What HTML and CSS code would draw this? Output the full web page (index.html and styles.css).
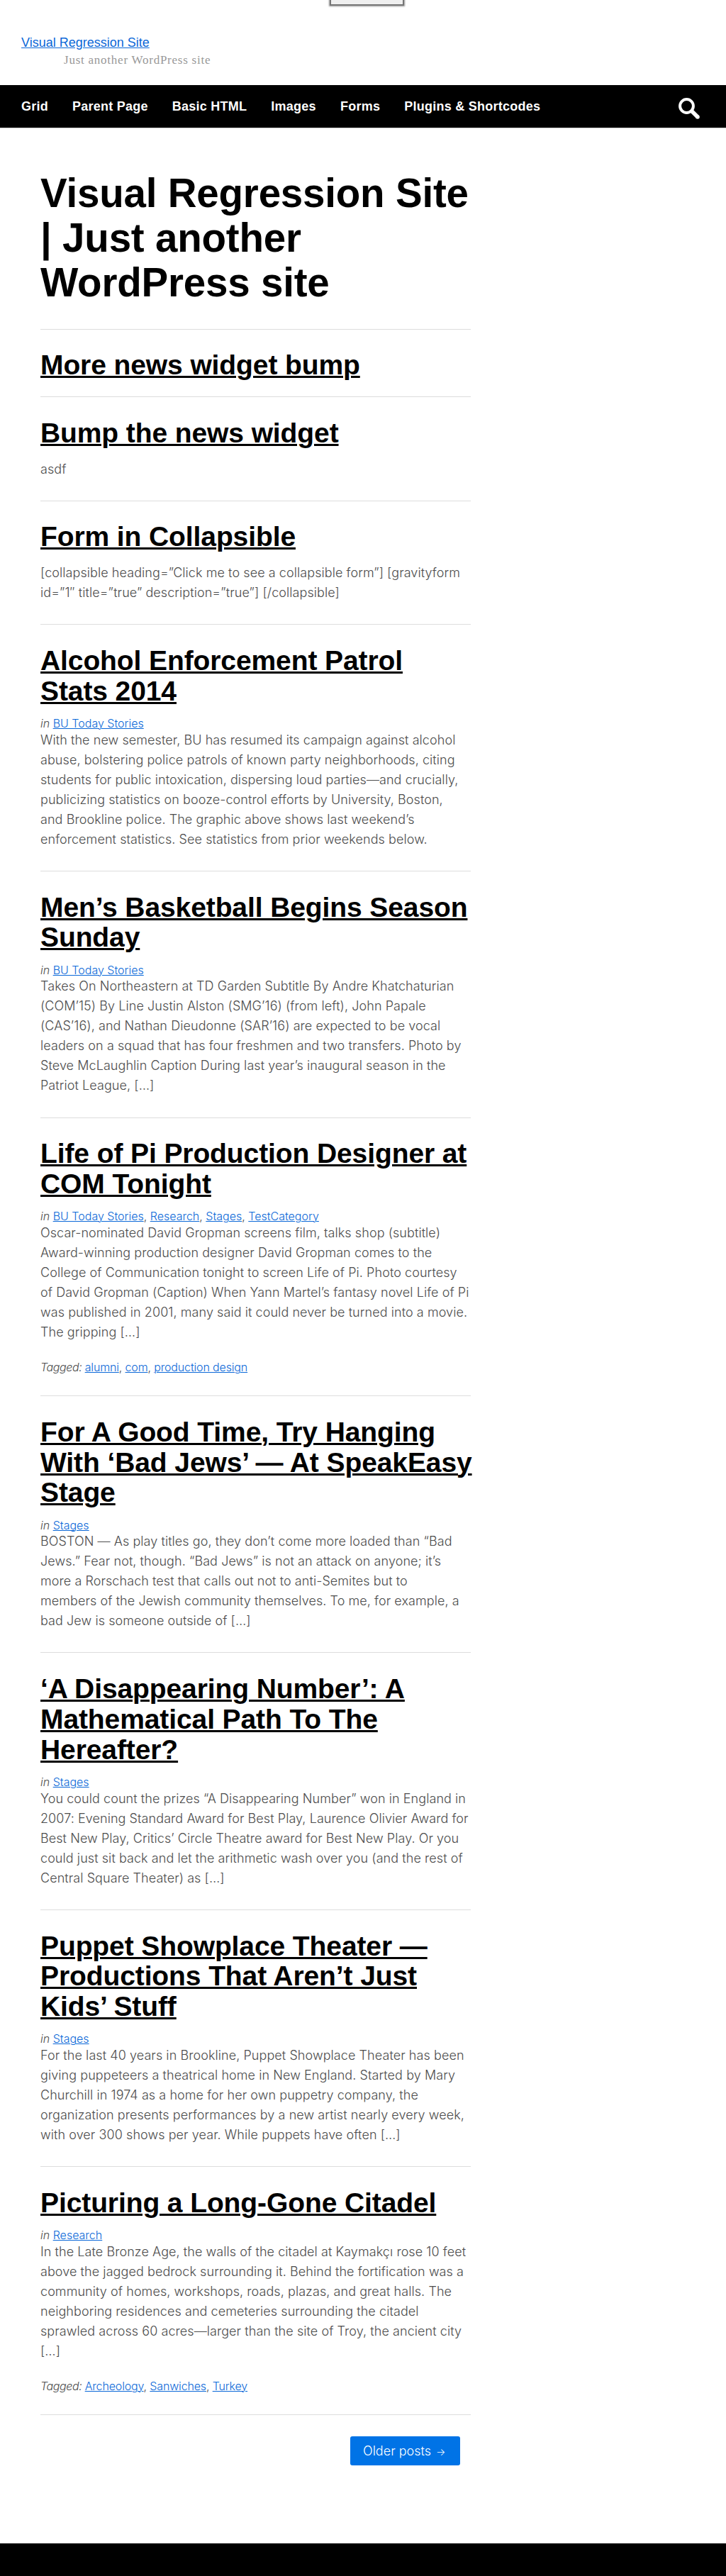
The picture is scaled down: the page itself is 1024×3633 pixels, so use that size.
FILE: index.html
```html
<!DOCTYPE html>
<html lang="en">
<head>
<meta charset="utf-8">
<title>Visual Regression Site | Just another WordPress site</title>
<link rel="stylesheet" href="styles.css">
</head>
<body>
<div class="skip-button"></div>
<header class="masthead">
  <a class="site-name" href="#">Visual Regression Site</a>
  <p class="tagline">Just another WordPress site</p>
</header>
<nav class="nav">
  <ul class="nav-list">
    <li>Grid</li>
    <li>Parent Page</li>
    <li>Basic HTML</li>
    <li>Images</li>
    <li>Forms</li>
    <li>Plugins &amp; Shortcodes</li>
  </ul>
  <svg class="search" width="30" height="30" viewBox="0 0 30 30"><circle cx="11.5" cy="11.5" r="9.4" fill="none" stroke="#fff" stroke-width="4"/><path d="M18.5 18.5L27.3 27.3" stroke="#fff" stroke-width="5.6"/><circle cx="27" cy="27" r="2.8" fill="#fff"/></svg>
</nav>
<main class="content">
  <h1>Visual Regression Site<br>| Just another<br>WordPress site</h1>
  <article class="post">
    <h2><a href="#">More news widget bump</a></h2>
  </article>
  <article class="post">
    <h2><a href="#">Bump the news widget</a></h2>
    <p>asdf</p>
  </article>
  <article class="post">
    <h2><a href="#">Form in Collapsible</a></h2>
    <p>[collapsible heading=”Click me to see a collapsible form”] [gravityform<br>id=”1″ title=”true” description=”true”] [/collapsible]</p>
  </article>
  <article class="post">
    <h2><a href="#">Alcohol Enforcement Patrol<br>Stats 2014</a></h2>
    <div class="meta"><em>in</em> <a href="#">BU Today Stories</a></div>
    <p>With the new semester, BU has resumed its campaign against alcohol<br>abuse, bolstering police patrols of known party neighborhoods, citing<br>students for public intoxication, dispersing loud parties—and crucially,<br>publicizing statistics on booze-control efforts by University, Boston,<br>and Brookline police. The graphic above shows last weekend’s<br>enforcement statistics. See statistics from prior weekends below.</p>
  </article>
  <article class="post">
    <h2><a href="#">Men’s Basketball Begins Season<br>Sunday</a></h2>
    <div class="meta"><em>in</em> <a href="#">BU Today Stories</a></div>
    <p>Takes On Northeastern at TD Garden Subtitle By Andre Khatchaturian<br>(COM’15) By Line Justin Alston (SMG’16) (from left), John Papale<br>(CAS’16), and Nathan Dieudonne (SAR’16) are expected to be vocal<br>leaders on a squad that has four freshmen and two transfers. Photo by<br>Steve McLaughlin Caption During last year’s inaugural season in the<br>Patriot League, […]</p>
  </article>
  <article class="post">
    <h2><a href="#">Life of Pi Production Designer at<br>COM Tonight</a></h2>
    <div class="meta"><em>in</em> <a href="#">BU Today Stories</a>, <a href="#">Research</a>, <a href="#">Stages</a>, <a href="#">TestCategory</a></div>
    <p>Oscar-nominated David Gropman screens film, talks shop (subtitle)<br>Award-winning production designer David Gropman comes to the<br>College of Communication tonight to screen Life of Pi. Photo courtesy<br>of David Gropman (Caption) When Yann Martel’s fantasy novel Life of Pi<br>was published in 2001, many said it could never be turned into a movie.<br>The gripping […]</p>
    <div class="meta tags"><em>Tagged:</em> <a href="#">alumni</a>, <a href="#">com</a>, <a href="#">production design</a></div>
  </article>
  <article class="post">
    <h2><a href="#">For A Good Time, Try Hanging<br>With ‘Bad Jews’ — At SpeakEasy<br>Stage</a></h2>
    <div class="meta"><em>in</em> <a href="#">Stages</a></div>
    <p>BOSTON — As play titles go, they don’t come more loaded than “Bad<br>Jews.” Fear not, though. “Bad Jews” is not an attack on anyone; it’s<br>more a Rorschach test that calls out not to anti-Semites but to<br>members of the Jewish community themselves. To me, for example, a<br>bad Jew is someone outside of […]</p>
  </article>
  <article class="post">
    <h2><a href="#">‘A Disappearing Number’: A<br>Mathematical Path To The<br>Hereafter?</a></h2>
    <div class="meta"><em>in</em> <a href="#">Stages</a></div>
    <p>You could count the prizes “A Disappearing Number” won in England in<br>2007: Evening Standard Award for Best Play, Laurence Olivier Award for<br>Best New Play, Critics’ Circle Theatre award for Best New Play. Or you<br>could just sit back and let the arithmetic wash over you (and the rest of<br>Central Square Theater) as […]</p>
  </article>
  <article class="post">
    <h2><a href="#">Puppet Showplace Theater —<br>Productions That Aren’t Just<br>Kids’ Stuff</a></h2>
    <div class="meta"><em>in</em> <a href="#">Stages</a></div>
    <p>For the last 40 years in Brookline, Puppet Showplace Theater has been<br>giving puppeteers a theatrical home in New England. Started by Mary<br>Churchill in 1974 as a home for her own puppetry company, the<br>organization presents performances by a new artist nearly every week,<br>with over 300 shows per year. While puppets have often […]</p>
  </article>
  <article class="post last">
    <h2><a href="#">Picturing a Long-Gone Citadel</a></h2>
    <div class="meta"><em>in</em> <a href="#">Research</a></div>
    <p>In the Late Bronze Age, the walls of the citadel at Kaymakçı rose 10 feet<br>above the jagged bedrock surrounding it. Behind the fortification was a<br>community of homes, workshops, roads, plazas, and great halls. The<br>neighboring residences and cemeteries surrounding the citadel<br>sprawled across 60 acres—larger than the site of Troy, the ancient city<br>[…]</p>
    <div class="meta tags"><em>Tagged:</em> <a href="#">Archeology</a>, <a href="#">Sanwiches</a>, <a href="#">Turkey</a></div>
  </article>
  <div class="pager"><a class="older" href="#">Older posts <span class="arrow">→</span></a></div>
</main>
<footer class="footer"></footer>
</body>
</html>
```
FILE: styles.css
```css
* { box-sizing: border-box; }
body {
  margin: 0;
  min-height: 3633px;
  display: flex;
  flex-direction: column;
  background: #fff;
  color: #4c4c4c;
  font-family: Inter, sans-serif;
  font-size: 18px;
  font-weight: 300;
  line-height: 28px;
}
h1, h2, p, ul { margin: 0; padding: 0; }
a { color: #0b68d8; }

.skip-button {
  position: absolute;
  top: -32px;
  left: 465px;
  width: 105px;
  height: 40px;
  border: 2px solid #767676;
  background: #efefef;
  box-shadow: 0 0 2px 1px rgba(0, 0, 0, .4);
}
.masthead { height: 120px; padding: 49px 30px 0; }
.site-name {
  display: block;
  font: 18px/22px "Liberation Sans", sans-serif;
}
.tagline {
  padding: 4px 0 0 60px;
  font: 17px/20px "Liberation Serif", serif;
  letter-spacing: .76px;
  color: #999;
}
.nav {
  height: 61px;
  padding: 0 37px 0 30px;
  display: flex;
  align-items: center;
  justify-content: space-between;
  background: #000;
  border-bottom: 1px solid #ccc;
}
.nav-list {
  display: flex;
  gap: 34px;
  list-style: none;
  color: #fff;
  font: 700 18px/28px "Liberation Sans", sans-serif;
  letter-spacing: .25px;
  white-space: nowrap;
}
.search { margin-top: 5px; }

.content { width: 664px; padding: 60px 0 0 57px; flex: 1; }
h1 {
  height: 222.5px;
  color: #000;
  font: 700 56.5px/63px "Liberation Sans", sans-serif;
  letter-spacing: -.2px;
  white-space: nowrap;
}
.post {
  border-top: 1px solid #ddd;
  padding: 29.6px 0 8px;
}
.post h2 {
  margin-bottom: 14.2px;
  font: 700 39px/42.9px "Liberation Sans", sans-serif;
  letter-spacing: -.1px;
  white-space: nowrap;
}
.post h2 a {
  color: #000;
  text-decoration-thickness: 3px;
  text-underline-offset: 2px;
}
.post p {
  padding-top: .7px;
  margin-bottom: 22.25px;
  letter-spacing: .07px;
  white-space: nowrap;
}
.meta { height: 18px; font-size: 16px; line-height: 18px; }
.meta a { text-decoration-thickness: 1px; text-underline-offset: 1px; }
.tags { height: 22px; padding-top: 4px; margin-bottom: 23px; letter-spacing: -.15px; }
.tags em { letter-spacing: -.4px; }
.last { border-bottom: 1px solid #ddd; }
.pager { display: flex; justify-content: flex-end; padding: 30px 15px 0 0; }
.older {
  width: 155px;
  height: 41px;
  padding-left: 18px;
  border-radius: 3px;
  background: #0073e6;
  color: #fff;
  line-height: 41px;
  text-decoration: none;
  white-space: nowrap;
}
.arrow { margin-left: 2px; font-size: 14px; }
.footer { height: 46px; background: #000; }
```
